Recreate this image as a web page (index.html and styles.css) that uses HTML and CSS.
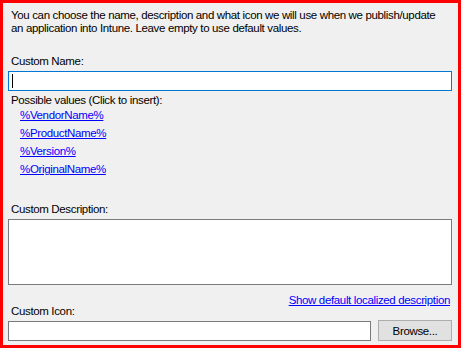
FILE: index.html
```html
<!DOCTYPE html>
<html lang="en">
<head>
    <meta charset="UTF-8">
    <title>Publish Settings</title>
    <link rel="stylesheet" href="styles.css">
</head>
<body>
    <div class="panel">
        <p class="intro">You can choose the name, description and what icon we will use when we publish/update<br>an application into Intune. Leave empty to use default values.</p>

        <label class="label name-label">Custom Name:</label>
        <div class="textbox focused"><span class="caret"></span></div>

        <div class="label values-label">Possible values (Click to insert):</div>
        <div class="values">
            <a href="#">%VendorName%</a>
            <a href="#">%ProductName%</a>
            <a href="#">%Version%</a>
            <a href="#">%OriginalName%</a>
        </div>

        <label class="label desc-label">Custom Description:</label>
        <div class="textarea"></div>

        <div class="icon-row">
            <label class="label">Custom Icon:</label>
            <a href="#" class="show-default">Show default localized description</a>
        </div>
        <div class="browse-row">
            <div class="textbox"></div>
            <button>Browse...</button>
        </div>
    </div>
</body>
</html>
```

FILE: styles.css
```css
body {
    margin: 0;
    font-family: "Liberation Sans", Arial, sans-serif;
    font-size: 11.5px;
    line-height: 13px;
    letter-spacing: -0.35px;
    color: #000;
}
.panel {
    border: 3px solid #ff0000;
    background: #f0f0f0;
    padding: 0 6px 0 5px;
    box-sizing: border-box;
    width: 461px;
    height: 348px;
    display: flex;
    flex-direction: column;
}
.intro {
    margin: 6px 0 0 3px;
    white-space: nowrap;
}
.label {
    display: block;
    margin-left: 3px;
}
.name-label {
    margin-top: 20px;
}
.textbox {
    background: white;
    border: 1px solid #7a7a7a;
    height: 20px;
    box-sizing: border-box;
    flex: 1;
}
.focused {
    flex: none;
    margin-top: 3px;
    border-color: #0078d7;
    padding: 2px 0 0 3px;
}
.caret {
    display: block;
    width: 1px;
    height: 14px;
    background: #000;
}
.values-label {
    margin-top: 3px;
}
.values {
    display: flex;
    flex-direction: column;
    align-items: flex-start;
    gap: 5px;
    margin: 2px 0 0 12px;
}
.values a,
.show-default {
    color: #0000ff;
    text-decoration: underline;
}
.desc-label {
    margin-top: 27px;
}
.textarea {
    margin-top: 3px;
    height: 66px;
    background: white;
    border: 1px solid #7a7a7a;
    box-sizing: border-box;
}
.icon-row {
    display: flex;
    justify-content: space-between;
    height: 24px;
    margin-top: 9px;
}
.icon-row .label {
    align-self: flex-end;
}
.show-default {
    align-self: flex-start;
    margin-right: 2px;
}
.browse-row {
    display: flex;
    gap: 7px;
    margin-top: 2px;
    align-items: flex-start;
}
.browse-row .textbox {
    margin-top: 1px;
}
button {
    width: 74px;
    height: 21px;
    background: #e1e1e1;
    border: 1px solid #adadad;
    font-family: inherit;
    font-size: 11.5px;
    letter-spacing: -0.35px;
    padding: 0;
    color: #000;
}
```
